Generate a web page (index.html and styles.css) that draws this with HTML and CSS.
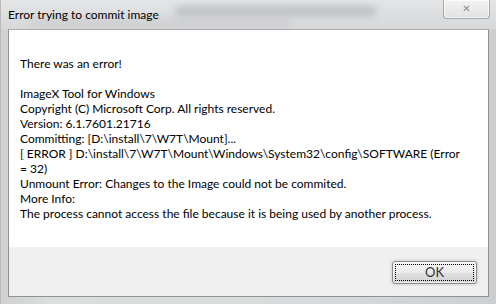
FILE: index.html
```html
<!DOCTYPE html>
<html lang="en">
<head>
    <meta charset="UTF-8">
    <title>Error trying to commit image</title>
    <link rel="stylesheet" href="styles.css">
</head>
<body>
    <div class="window">
        <div class="titlebar">
            <span class="blur one"></span>
            <span class="blur two"></span>
            <span class="title">Error trying to commit image</span>
            <div class="close">&#x2715;</div>
        </div>
        <div class="client">
            <div class="content">
                <p>There was an error!</p>
                <p class="gap"></p>
                <p>ImageX Tool for Windows</p>
                <p>Copyright (C) Microsoft Corp. All rights reserved.</p>
                <p>Version: 6.1.7601.21716</p>
                <p>Committing: [D:\install\7\W7T\Mount]...</p>
                <p class="wrap">[ ERROR ] D:\install\7\W7T\Mount\Windows\System32\config\SOFTWARE (Error = 32)</p>
                <p>Unmount Error: Changes to the Image could not be commited.</p>
                <p>More Info:</p>
                <p>The process cannot access the file because it is being used by another process.</p>
            </div>
            <div class="footer">
                <div class="button"><span class="focus">OK</span></div>
            </div>
        </div>
    </div>
</body>
</html>
```

FILE: styles.css
```css
*{
    box-sizing: border-box;
}
html, body{
    margin: 0;
    width: 496px;
    height: 304px;
    overflow: hidden;
}
body{
    font-family: 'Lato', 'Noto Sans', sans-serif;
    font-size: 12px;
    color: #000;
}

.window {
    width: 496px;
    height: 304px;
    display: flex;
    flex-direction: column;
    background: linear-gradient(to right, #cfd0d1, #dcdddd 10%, #d9dadb 60%, #cdcecf);
    border-left: 1px solid #b9b9b9;
}

.titlebar {
    position: relative;
    height: 29px;
    display: flex;
    align-items: flex-start;
    padding-left: 7px;
    background: linear-gradient(to bottom, #e4e5e6, #d6d7d9);
}

.title {
    position: relative;
    margin-top: 7px;
    line-height: 15px;
    color: #000;
}

.blur {
    position: absolute;
    background: #8e9094;
    filter: blur(4px);
    opacity: 0.5;
}
.blur.one {
    left: 175px;
    top: 7px;
    width: 200px;
    height: 8px;
}
.blur.two {
    left: 30px;
    top: 21px;
    width: 260px;
    height: 4px;
    opacity: 0.3;
}

.close {
    position: relative;
    margin-left: auto;
    margin-right: 6px;
    width: 47px;
    height: 19px;
    border: 1px solid #a4a6a9;
    border-top: none;
    border-radius: 0 0 4px 4px;
    background: linear-gradient(to bottom, #f2f2f2, #e1e2e3);
    box-shadow: inset 0 0 0 1px rgba(255,255,255,0.7);
    color: #8b8d90;
    font-family: 'DejaVu Sans', sans-serif;
    font-size: 10px;
    font-weight: bold;
    line-height: 18px;
    text-align: center;
}

.client {
    flex: 1;
    display: flex;
    flex-direction: column;
    margin: 0 7px 7px 7px;
    border: 1px solid #8f9193;
    border-top-color: #a9abad;
}

.content {
    flex: 1;
    background: #fff;
    padding: 26px 12px 0 11px;
}

.content p {
    margin: 0;
    line-height: 15px;
    min-height: 15px;
}
.content p.wrap {
    width: 440px;
}

.footer {
    height: 49px;
    background: #f0f0f0;
    display: flex;
    justify-content: flex-end;
    align-items: flex-start;
    padding: 14px 11px 0 0;
}

.button {
    width: 85px;
    height: 23px;
    border: 1px solid #8a8a8a;
    border-radius: 3px;
    background: linear-gradient(to bottom, #f4f4f4 0%, #ececec 50%, #e0e0e0 51%, #d3d3d3 100%);
    box-shadow: 0 0 3px 1px rgba(190,190,190,0.6), inset 0 0 0 1px rgba(255,255,255,0.6);
    padding: 2px;
}

.focus {
    display: block;
    height: 100%;
    border: 1px dotted #000;
    text-align: center;
    line-height: 15px;
    font-size: 13px;
    color: #333;
}
```
